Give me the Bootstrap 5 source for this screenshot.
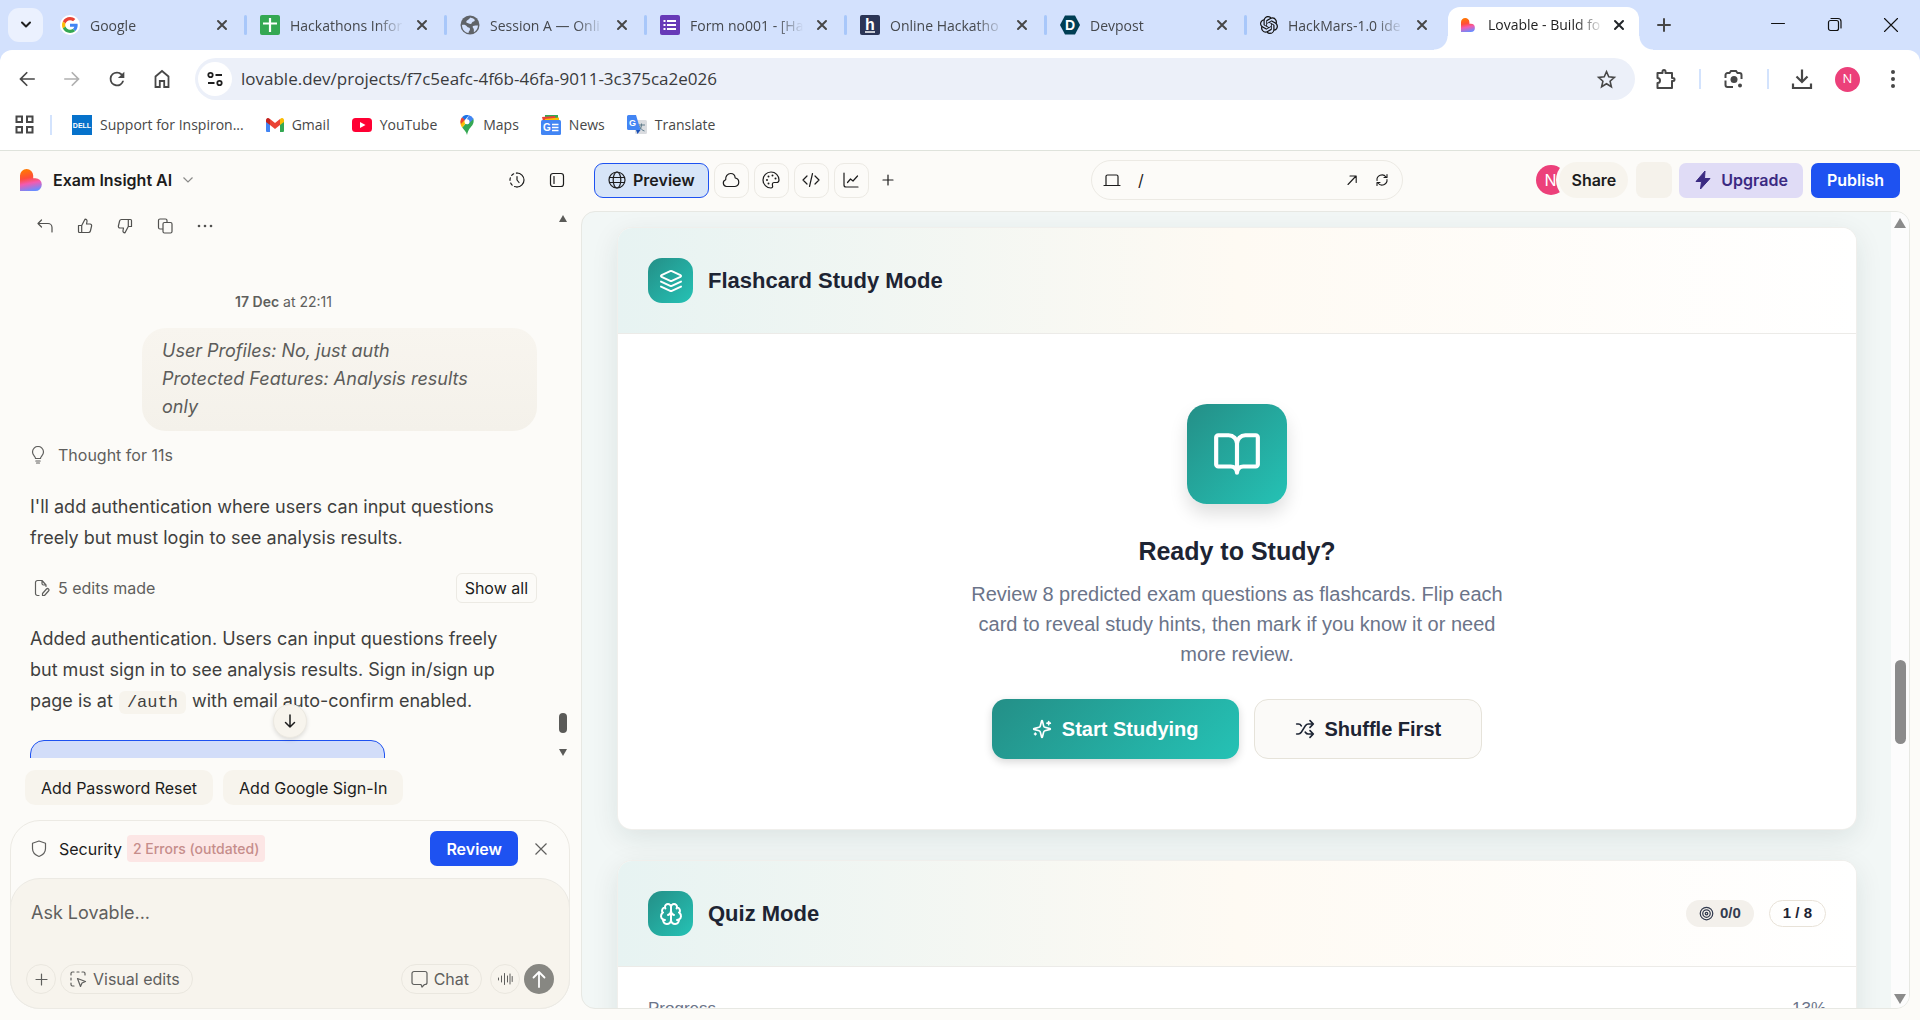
<!DOCTYPE html>
<html lang="en">
<head>
<meta charset="utf-8">
<meta name="viewport" content="width=device-width, initial-scale=1">
<title>Lovable - Build for the web</title>
<link href="https://cdn.jsdelivr.net/npm/bootstrap@5.3.0/dist/css/bootstrap.min.css" rel="stylesheet">
<style>
  :root { --cream: #fcfbf8; --sand: #f7f4ed; --line: #eceae4; --blue: #1e52f1; --ink: #1c1c1c; --mute: #5f5f5d; --navy: #1d2433; --tab-blue: #d3e1fd; }
  body { font-family: Inter, "Liberation Sans", sans-serif; color: var(--ink); background: var(--cream); height: 100vh; overflow: hidden; }
  button, input, textarea { font-family: inherit; color: inherit; }
  .bare { background: none; border: 0; padding: 0; display: inline-flex; align-items: center; justify-content: center; flex: none; }
  svg { display: block; flex: none; }
  .ln { fill: none; stroke: currentColor; stroke-linecap: round; stroke-linejoin: round; }
  .min0 { min-width: 0; min-height: 0; }

  /* browser chrome */
  .chrome { font-family: "Open Sans", "Noto Sans", sans-serif; color: #474747; }
  .tabstrip { background: var(--tab-blue); height: 50px; padding-left: 8px; }
  .tab-search { width: 35px; height: 34px; border-radius: 11px; background: #ebf1fe; color: #1f1f1f; margin-right: 3px; }
  .btab { flex: 0 1 200px; min-width: 0; height: 34px; padding: 0 18px 0 14px; gap: 10px; position: relative; font-size: 14px; }
  .btab::after { content: ""; position: absolute; right: -1px; top: 7px; width: 3px; height: 20px; border-radius: 2px; background: #a8c7fa; }
  .btab.last::after, .btab.on::after { display: none; }
  .btab .label { flex: 1; overflow: hidden; white-space: nowrap; color: #45484d; -webkit-mask-image: linear-gradient(90deg, #000 74%, transparent 98%); mask-image: linear-gradient(90deg, #000 74%, transparent 98%); }
  .btab.on { flex: 0 1 191px; margin-left: 2px; height: 43px; align-self: flex-end; background: #fff; border-radius: 12px 12px 0 0; padding: 0 14px 8px 13px; gap: 13px; }
  .btab.on .label { color: #1f1f1f; margin-right: -6px; }
  .btab.on .flare { position: absolute; bottom: 0; width: 14px; height: 14px; }
  .flare.l { left: -14px; background: radial-gradient(circle at 0 0, transparent 13px, #fff 14px); }
  .flare.r { right: -14px; background: radial-gradient(circle at 100% 0, transparent 13px, #fff 14px); }
  .newtab { margin-left: 18px; }
  .winbtns { gap: 38px; padding-right: 20px; color: #111; }
  .cap { background: var(--tab-blue); }
  .toolbar { background: #fff; height: 58px; border-radius: 12px 12px 0 0; padding: 0 16px; }
  .navset { gap: 23px; margin-right: 22px; }
  .extset { gap: 22px; padding-left: 20px; }
  .omni { background: #ecf0f9; height: 42px; border-radius: 21px; padding: 0 18px 0 3px; }
  .omni .site { width: 34px; height: 34px; border-radius: 50%; background: #fff; color: #1f1f1f; }
  .omni input { border: 0; background: none; outline: 0; font-size: 17px; flex: 1; padding: 0 0 0 9px; color: #3a3b3d; }
  .vbar { width: 2px; height: 20px; background: #d3e3fd; flex: none; }
  .pink { background: #ec407a; color: #fff; border-radius: 50%; }
  .me-pic { width: 25px; height: 25px; font-size: 13px; }
  .bookmarks { background: #fff; height: 42px; padding: 0 15px 9px; font-size: 14px; }
  .bookmarks a { color: #474747; text-decoration: none; white-space: nowrap; display: flex; align-items: center; gap: 8px; }
  .marks { gap: 22px; padding-left: 4px; }

  /* app */
  .app { border-top: 1px solid #dfe3dc; }
  .chat-pane { width: 581px; flex: none; }
  .pane-head { height: 59px; padding: 0 16px 2px 20px; }
  .proj { font-size: 16px; font-weight: 600; gap: 10px; margin-left: 11px; }
  .scroller { overflow: hidden; position: relative; }
  .chat-col { padding: 0 0 0 30px; width: 537px; font-size: 18px; line-height: 31px; color: #3f3f3e; }
  .chat-col .para { margin-top: 20px; padding-right: 10px; }
  .acts { padding: 8px 0 0 7px; gap: 24px; color: #51514f; }
  .stamp { font-size: 14px; line-height: 20px; color: var(--mute); margin-top: 58px; }
  .bubble { margin: 16px 0 0 112px; padding: 9px 20px 10px; border-radius: 24px; background: linear-gradient(#f8f5ef, #f4f1ea); font-style: italic; line-height: 28px; color: #5c5c5a; }
  .soft { font-size: 16px; line-height: 24px; color: var(--mute); }
  .soft.thought { margin: 12px 0 4px; gap: 12px; }
  .soft.edits { margin-top: 20px; }
  .show-all { font-size: 16px; line-height: 22px; border: 1px solid var(--line); border-radius: 6px; background: none; padding: 3px 8px; color: var(--ink); }
  .codebit { font: 17px/24px "Liberation Mono", monospace; color: #3f3f3e; background: var(--sand); border-radius: 6px; padding: 2px 8px; margin: 0 1px; }
  .bluecard { width: 355px; height: 60px; flex: none; border: 1px solid var(--blue); border-radius: 14px; background: #d2ddf9; margin-top: 24px; }
  .jump { position: absolute; left: 273px; bottom: 20px; width: 34px; height: 34px; border-radius: 50%; background: var(--sand); border: 1px solid #ece9e1; box-shadow: 0 2px 4px rgba(0,0,0,.12); z-index: 2; }
  .rail { position: absolute; right: 10px; top: 5px; bottom: 2px; width: 16px; }
  .rail .knob { width: 8px; height: 20px; border-radius: 4px; background: #5a5a58; }
  .chips { gap: 10px; padding: 12px 0 0 25px; }
  .chip { background: var(--sand); border: 0; border-radius: 10px; height: 35px; padding: 0 16px; font-size: 16px; }
  .composer { margin: 15px 11px 11px 10px; border: 1px solid var(--line); border-radius: 30px; }
  .sec-row { height: 57px; padding: 0 21px 2px 20px; font-size: 16px; }
  .sec-name { margin: 0 5px 0 12px; }
  .warn { background: #fce6e5; color: #c68d8b; font-size: 14px; font-weight: 500; border-radius: 4px; height: 27px; padding: 0 6px; }
  .solid { background: var(--blue); color: #fff; border: 0; border-radius: 7px; height: 35px; font-size: 16px; font-weight: 600; padding: 0 16px; }
  .askbox { background: var(--sand); border: 1px solid var(--line); border-radius: 30px; margin: 0 -1px -1px; padding: 20px 15px 14px 15px; }
  .askbox textarea { border: 0; background: none; outline: 0; resize: none; display: block; width: 100%; height: 65px; font-size: 18px; line-height: 28px; padding: 0 5px; overflow: hidden; }
  .askbox textarea::placeholder { color: #5f5f5d; opacity: 1; }
  .round { height: 30px; border: 1px solid #eae7df; border-radius: 15px; background: none; color: var(--mute); font-size: 16px; gap: 6px; }
  .round.sq { width: 30px; padding: 0; }
  .send { width: 30px; height: 30px; background: #878782; color: #fff; }

  /* preview */
  .tools { height: 60px; padding: 0 20px 2px 13px; }
  .tools-side { flex: 1 1 0; gap: 5px; }
  .tbtn { width: 35px; height: 35px; border: 1px solid var(--line); border-radius: 10px; padding: 0; }
  .pv { height: 35px; border: 1px solid var(--blue); border-radius: 9px; background: #d7e5f8; font-size: 16px; font-weight: 600; padding: 0 13px; gap: 7px; }
  .addr { width: 312px; height: 40px; border: 1px solid var(--line); border-radius: 20px; padding: 0 13px 0 11px; gap: 17px; }
  .addr input { border: 0; background: none; outline: 0; flex: 1; font-size: 16px; padding: 0; }
  .mate { width: 30px; height: 30px; font-size: 16px; }
  .share { height: 36px; border: 0; border-radius: 18px; background: var(--sand); padding: 0 12px; font-size: 16px; font-weight: 600; margin-left: -12px; position: relative; box-shadow: 0 0 0 3px var(--cream); }
  .blank { width: 36px; height: 36px; border-radius: 8px; background: #f5f2eb; margin: 0 2px 0 3px; }
  .upg { background: #e0dcf6; color: #3b2a82; border: 0; border-radius: 7px; height: 35px; font-size: 16px; font-weight: 600; padding: 0 15px; margin-right: 3px; gap: 9px; }
  .frame { border: 1px solid #e7e8e3; border-radius: 14px; margin: 0 10px 11px 0; overflow: hidden; background: #f2f7f6; }
  .site-col { font-family: "Liberation Sans", Arial, sans-serif; padding: 16px 35px 0 36px; gap: 32px; overflow: hidden; }
  .panel { background: #fff; border-radius: 14px; box-shadow: 0 0 0 1px #f0efec, 0 8px 28px rgba(20,50,45,.10); flex: none; overflow: hidden; color: var(--navy); }
  .panel-head { height: 106px; padding: 0 30px; border-bottom: 1px solid #ecebe8; background: linear-gradient(90deg, #e7f3f2, #fefaf3 50%, #fff); }
  .grad { background: linear-gradient(135deg, #248f87, #25c2b5); color: #fff; }
  .tile { width: 45px; height: 45px; border-radius: 14px; margin-right: 15px; }
  .panel h2 { font-size: 22px; font-weight: 700; line-height: 30px; margin: 0; }
  .hero { padding: 70px 30px; }
  .bigtile { width: 100px; height: 100px; border-radius: 20px; box-shadow: 0 10px 18px rgba(0,0,0,.13); }
  .hero h3 { font-size: 25px; line-height: 34px; font-weight: 700; margin: 30px 0 0; }
  .hero p { font-size: 20px; line-height: 30px; color: #6b7489; max-width: 560px; margin: 11px 0 30px; }
  .cta-row { gap: 15px; }
  .cta { height: 60px; border-radius: 14px; font-size: 20px; font-weight: 700; padding: 0 40px; gap: 10px; border: 0; }
  .cta.grad { box-shadow: 0 3px 8px rgba(0,0,0,.16); }
  .cta.plain { background: #fbfaf8; border: 1px solid #e6e3da; color: var(--navy); }
  .pillb { height: 27px; border-radius: 14px; font-size: 15px; font-weight: 700; padding: 0 13px; gap: 6px; }
  .pillb.score { background: #f3f0eb; color: #343c50; margin-right: 15px; }
  .pillb.step { border: 1px solid #e8e2d8; }
  .prog { padding: 29px 30px; font-size: 17px; line-height: 25px; color: #6b7489; }
  .vscroll { width: 18px; background: #fcfcfc; color: #8b8b8b; flex: none; padding: 6px 0 4px; }
  .vscroll .knob { width: 11px; height: 84px; border-radius: 6px; background: #8b8b8b; }
  .above { flex: 429; }
  .below { flex: 249; }
</style>
</head>
<body class="d-flex flex-column">

<header class="chrome flex-shrink-0">
  <div class="tabstrip d-flex align-items-center">
    <button class="bare tab-search" aria-label="Search tabs"><svg width="12" height="8" class="ln" stroke-width="2"><path d="M2 1.500l4 4 4-4"/></svg></button>
    <div class="btab d-flex align-items-center">
      <svg width="20" height="20" viewBox="-6 -6 60 60"><circle cx="24" cy="24" r="30" fill="#fff"/><path fill="#EA4335" d="M24 9.5c3.540 0 6.710 1.220 9.210 3.600l6.850-6.850C35.900 2.380 30.470 0 24 0 14.620 0 6.510 5.380 2.560 13.220l7.980 6.190C12.430 13.720 17.740 9.500 24 9.500z"/><path fill="#4285F4" d="M46.980 24.550c0-1.570-.15-3.090-.38-4.550H24v9.020h12.940c-.58 2.960-2.260 5.480-4.780 7.180l7.730 6c4.510-4.180 7.090-10.360 7.090-17.650z"/><path fill="#FBBC05" d="M10.530 28.590c-.48-1.450-.76-2.990-.76-4.590s.27-3.140.76-4.590l-7.980-6.190C.92 16.460 0 20.120 0 24c0 3.880.92 7.540 2.560 10.780l7.970-6.190z"/><path fill="#34A853" d="M24 48c6.480 0 11.930-2.130 15.890-5.810l-7.730-6c-2.150 1.450-4.920 2.300-8.160 2.300-6.260 0-11.570-4.220-13.470-9.910l-7.980 6.190C6.510 42.620 14.620 48 24 48z"/></svg>
      <span class="label">Google</span><button class="bare" aria-label="Close tab"><svg width="12" height="12" class="ln" stroke-width="2"><path d="M2 2l8 8M10 2l-8 8"/></svg></button>
    </div>
    <div class="btab d-flex align-items-center">
      <svg width="20" height="20" viewBox="0 0 20 20"><rect width="20" height="20" rx="2" fill="#34a853"/><path d="M10 3v14M3 8.500h14" stroke="#fff" stroke-width="2.200"/></svg>
      <span class="label">Hackathons Infor</span><button class="bare" aria-label="Close tab"><svg width="12" height="12" class="ln" stroke-width="2"><path d="M2 2l8 8M10 2l-8 8"/></svg></button>
    </div>
    <div class="btab d-flex align-items-center">
      <svg width="20" height="20" viewBox="0 0 20 20"><circle cx="10" cy="10" r="9.500" fill="#5f6368"/><path d="M10.500 2.500c1.500 1 3 .5 4 2s-1 2-2 2.500-.5 2-2 2-2-1-3-1-1.500-1-1-2 2-1 2.500-2zM2 10c2-.5 4 0 5 1.500s3 .5 3 2.500-1.500 2-1.500 4C5 17.500 2 14.500 2 10zM13 11c1.500-1 3.500-.5 5-.5-.2 3-1.800 5.500-4 6.800-.5-1.300.2-2-.3-3.300S12 12 13 11z" fill="#d3e1fd"/></svg>
      <span class="label">Session A — Onli</span><button class="bare" aria-label="Close tab"><svg width="12" height="12" class="ln" stroke-width="2"><path d="M2 2l8 8M10 2l-8 8"/></svg></button>
    </div>
    <div class="btab d-flex align-items-center">
      <svg width="20" height="20" viewBox="0 0 20 20"><rect width="20" height="20" rx="2" fill="#673ab7"/><path d="M7 6h9M7 10h9M7 14h9M3.500 6h2M3.500 10h2M3.500 14h2" stroke="#fff" stroke-width="2"/></svg>
      <span class="label">Form no001 - [Ha</span><button class="bare" aria-label="Close tab"><svg width="12" height="12" class="ln" stroke-width="2"><path d="M2 2l8 8M10 2l-8 8"/></svg></button>
    </div>
    <div class="btab d-flex align-items-center">
      <svg width="20" height="20" viewBox="0 0 20 20"><rect width="20" height="20" rx="2" fill="#2b3556"/><text x="10" y="14.500" font-size="16" font-weight="700" text-anchor="middle" fill="#fff" font-family="Liberation Sans">h</text><path d="M5 17h10" stroke="#fff" stroke-width="1.500"/></svg>
      <span class="label">Online Hackatho</span><button class="bare" aria-label="Close tab"><svg width="12" height="12" class="ln" stroke-width="2"><path d="M2 2l8 8M10 2l-8 8"/></svg></button>
    </div>
    <div class="btab d-flex align-items-center">
      <svg width="20" height="20" viewBox="0 0 20 20"><path d="M5 .5h10l5 9.500-5 9.500H5L0 10z" fill="#003e54"/><text x="10" y="15" font-size="14" font-weight="700" text-anchor="middle" fill="#fff" font-family="Liberation Sans">D</text></svg>
      <span class="label">Devpost</span><button class="bare" aria-label="Close tab"><svg width="12" height="12" class="ln" stroke-width="2"><path d="M2 2l8 8M10 2l-8 8"/></svg></button>
    </div>
    <div class="btab last d-flex align-items-center">
      <svg width="18" height="18" viewBox="0 0 24 24"><path d="M22.2819 9.8211a5.9847 5.9847 0 0 0-.5157-4.9108 6.0462 6.0462 0 0 0-6.5098-2.9A6.0651 6.0651 0 0 0 4.9807 4.1818a5.9847 5.9847 0 0 0-3.9977 2.9 6.0462 6.0462 0 0 0 .7427 7.0966 5.98 5.98 0 0 0 .511 4.9107 6.051 6.051 0 0 0 6.5146 2.9001A5.9847 5.9847 0 0 0 13.2599 24a6.0557 6.0557 0 0 0 5.7718-4.2058 5.9894 5.9894 0 0 0 3.9977-2.9001 6.0557 6.0557 0 0 0-.7475-7.0729zm-9.022 12.6081a4.4755 4.4755 0 0 1-2.8764-1.0408l.1419-.0804 4.7783-2.7582a.7948.7948 0 0 0 .3927-.6813v-6.7369l2.02 1.1686a.071.071 0 0 1 .038.052v5.5826a4.504 4.504 0 0 1-4.4945 4.4944zm-9.6607-4.1254a4.4708 4.4708 0 0 1-.5346-3.0137l.142.0852 4.783 2.7582a.7712.7712 0 0 0 .7806 0l5.8428-3.3685v2.3324a.0804.0804 0 0 1-.0332.0615L9.74 19.9502a4.4992 4.4992 0 0 1-6.1408-1.6464zM2.3408 7.8956a4.485 4.485 0 0 1 2.3655-1.9728V11.6a.7664.7664 0 0 0 .3879.6765l5.8144 3.3543-2.0201 1.1685a.0757.0757 0 0 1-.071 0l-4.8303-2.7865A4.504 4.504 0 0 1 2.3408 7.872zm16.5963 3.8558L13.1038 8.364 15.1192 7.2a.0757.0757 0 0 1 .071 0l4.8303 2.7913a4.4944 4.4944 0 0 1-.6765 8.1042v-5.6772a.79.79 0 0 0-.407-.667zm2.0107-3.0231l-.142-.0852-4.7735-2.7818a.7759.7759 0 0 0-.7854 0L9.409 9.2297V6.8974a.0662.0662 0 0 1 .0284-.0615l4.8303-2.7866a4.4992 4.4992 0 0 1 6.6802 4.66zM8.3065 12.863l-2.02-1.1638a.0804.0804 0 0 1-.038-.0567V6.0742a4.4992 4.4992 0 0 1 7.3757-3.4537l-.142.0805L8.704 5.459a.7948.7948 0 0 0-.3927.6813zm1.0976-2.3654l2.602-1.4998 2.6069 1.4998v2.9994l-2.5974 1.4997-2.6067-1.4997Z" fill="#111"/></svg>
      <span class="label">HackMars-1.0 ide</span><button class="bare" aria-label="Close tab"><svg width="12" height="12" class="ln" stroke-width="2"><path d="M2 2l8 8M10 2l-8 8"/></svg></button>
    </div>
    <div class="btab on d-flex align-items-center">
      <span class="flare l"></span><span class="flare r"></span>
      <svg width="14" height="14" viewBox="0 0 22 22"><use href="#heart"/></svg>
      <span class="label">Lovable - Build fo</span><button class="bare text-dark" aria-label="Close tab"><svg width="12" height="12" class="ln" stroke-width="2"><path d="M2 2l8 8M10 2l-8 8"/></svg></button>
    </div>
    <button class="bare newtab" aria-label="New tab"><svg width="14" height="14" class="ln" stroke-width="2"><path d="M7 1v12M1 7h12"/></svg></button>
    <div class="winbtns d-flex align-items-center ms-auto">
      <button class="bare" aria-label="Minimise"><svg width="20" height="20" class="ln" stroke-width="1"><path d="M3.500 8.500h13"/></svg></button>
      <button class="bare" aria-label="Restore"><svg width="18" height="18" class="ln" stroke-width="1.200"><rect x="2.500" y="4.500" width="10" height="10" rx="2"/><path d="M5 2.500h7a3 3 0 0 1 3 3V12"/></svg></button>
      <button class="bare" aria-label="Close window"><svg width="18" height="18" class="ln" stroke-width="1.100"><path d="M2.500 2.500l13 13M15.500 2.500l-13 13"/></svg></button>
    </div>
  </div>

  <div class="cap">
  <div class="toolbar d-flex align-items-center">
    <div class="navset d-flex align-items-center">
      <button class="bare" aria-label="Back"><svg width="22" height="22" viewBox="0 0 24 24" fill="#474747"><path d="M20.500 11.100H7l5.900-5.900L11.600 4l-8 8 8 8 1.300-1.200L7 12.900h13.500z"/></svg></button>
      <button class="bare" aria-label="Forward"><svg width="22" height="22" viewBox="0 0 24 24" fill="#b0b0b0"><path d="M3.500 11.100H17l-5.900-5.900L12.400 4l8 8-8 8-1.300-1.200 5.900-5.900H3.500z"/></svg></button>
      <button class="bare" aria-label="Reload"><svg width="22" height="22" viewBox="0 0 24 24" fill="#474747"><path d="M17.650 6.350A7.960 7.960 0 0 0 12 4a8 8 0 1 0 7.730 10h-2.080A6 6 0 1 1 12 6c1.660 0 3.140.69 4.220 1.780L13 11h7V4z"/></svg></button>
      <button class="bare" aria-label="Home"><svg width="22" height="22" viewBox="0 0 22 22" fill="none" stroke="#474747" stroke-width="1.800"><path d="M4.500 8.500L11 3l6.500 5.500V19h-4.300v-6H8.800v6H4.500z"/></svg></button>
    </div>
    <div class="omni d-flex align-items-center flex-grow-1">
      <button class="bare site" aria-label="Site information"><svg width="18" height="18" fill="none" stroke="currentColor" stroke-width="1.800"><circle cx="4.500" cy="5" r="2.200"/><path d="M9.500 5H16M2 13h6.500"/><circle cx="13.500" cy="13" r="2.200"/></svg></button>
      <input type="text" aria-label="Address" value="lovable.dev/projects/f7c5eafc-4f6b-46fa-9011-3c375ca2e026">
      <button class="bare" aria-label="Bookmark"><svg width="21" height="21" viewBox="0 0 24 24" fill="none" stroke="#474747" stroke-width="1.800"><path d="M12 3l2.600 6 6.400.6-4.900 4.300 1.500 6.400L12 16.900l-5.600 3.400 1.500-6.400L3 9.600 9.400 9z"/></svg></button>
    </div>
    <div class="extset d-flex align-items-center">
      <button class="bare" aria-label="Extensions"><svg width="22" height="22" viewBox="0 0 22 22" fill="none" stroke="#474747" stroke-width="2" stroke-linejoin="round"><path d="M2.500 5h5V3.500a1.500 1.500 0 0 1 3 0V5H17v5h1a1.500 1.500 0 0 1 0 3h-1v7H2.500v-5a2.500 2.500 0 0 0 0-5z"/></svg></button>
      <span class="vbar"></span>
      <button class="bare" aria-label="Lens"><svg width="22" height="22" fill="none" stroke="#474747" stroke-width="2"><path d="M2.500 10V7a2 2 0 0 1 2-2h2l1.500-2h5L14.500 5h2a2 2 0 0 1 2 2v4M2.500 12.500V17a2 2 0 0 0 2 2H10"/><circle cx="11" cy="11.500" r="3.500" fill="#474747" stroke="none"/><circle cx="17" cy="17.500" r="2" fill="#474747" stroke="none"/></svg></button>
      <span class="vbar"></span>
      <button class="bare" aria-label="Downloads"><svg width="22" height="22" fill="none" stroke="#474747" stroke-width="2.200"><path d="M11 1.500v12M5.500 8.500L11 14l5.500-5.500M2 15.500V20h18v-4.500"/></svg></button>
      <button class="bare pink me-pic" aria-label="Profile">N</button>
      <button class="bare" aria-label="Menu"><svg width="22" height="22" fill="#474747"><circle cx="11" cy="4" r="2"/><circle cx="11" cy="11" r="2"/><circle cx="11" cy="18" r="2"/></svg></button>
    </div>
  </div>
  </div>

  <nav class="bookmarks d-flex align-items-center">
    <button class="bare" aria-label="Apps"><svg width="19" height="19" fill="none" stroke="#474747" stroke-width="2"><path d="M1.500 1.500h5.500v5.500H1.500zM12 1.500h5.500v5.500H12zM1.500 12h5.500v5.500H1.500zM12 12h5.500v5.500H12z"/></svg></button>
    <span class="vbar ms-3 me-3"></span>
    <div class="marks d-flex align-items-center">
    <a href="#"><svg width="20" height="20"><rect width="20" height="20" fill="#0672cb"/><text x="10" y="13" font-size="7" font-weight="700" text-anchor="middle" fill="#fff" font-family="Liberation Sans">DELL</text></svg>Support for Inspiron...</a>
    <a href="#"><svg width="18" height="14" viewBox="0 0 18 14"><path d="M0 2v11a1 1 0 0 0 1 1h3V5z" fill="#4285f4"/><path d="M18 2v11a1 1 0 0 1-1 1h-3V5z" fill="#34a853"/><path d="M14 1v6l4-3V2a2 2 0 0 0-3.200-1.600z" fill="#fbbc04"/><path d="M4 1v6l5 4 5-4V1L9 5z" fill="#ea4335"/><path d="M0 4l4 3V1l-.8-.6A2 2 0 0 0 0 2z" fill="#c5221f"/></svg>Gmail</a>
    <a href="#"><svg width="20" height="14"><rect width="20" height="14" rx="3.500" fill="#f03"/><path d="M8 4l5.500 3L8 10z" fill="#fff"/></svg>YouTube</a>
    <a href="#"><svg width="16" height="20" viewBox="1 0 16 20"><path d="M9 20c-.6-3.500-3-5-4.800-7.500L11 5l4.300-1.500C17 9 12.500 12 11 14.500 9.800 16.500 9.600 18 9 20z" fill="#34a853"/><path d="M4.200 12.500C2.600 10.300 2.300 8.500 2.400 6.500L4 3.500 9 7z" fill="#fbbc04"/><path d="M11 .3A6.600 6.600 0 0 1 15.500 4L9 10V4z" fill="#4285f4"/><path d="M4 2.300A6.600 6.600 0 0 1 11 .3L6.500 5.500z" fill="#1a73e8"/><path d="M4 2.300L6.800 4.700 3 9C2 6.500 2.500 4 4 2.300z" fill="#ea4335"/><circle cx="9" cy="6.700" r="2.500" fill="#fff"/></svg>Maps</a>
    <a href="#"><svg width="20" height="20"><path d="M4 0h13v6H4z" fill="#34a853"/><path d="M1 2l13-1 1 5H2z" fill="#ea4335"/><path d="M4 4l14-1.500V7H4z" fill="#fbbc04"/><rect y="5" width="20" height="15" rx="1.500" fill="#4285f4"/><text x="6" y="16" font-size="10" font-weight="700" text-anchor="middle" fill="#fff" font-family="Liberation Sans">G</text><path d="M11 9.500h6.500M11 12.500h6.500M11 15.500h6.500" stroke="#fff" stroke-width="1.400"/></svg>News</a>
    <a href="#"><svg width="20" height="20"><rect x="8" y="5" width="12" height="14" rx="1.500" fill="#dadce0"/><path d="M11 10h7M14.500 8.500V10c0 3-2 5-3.500 6M12.500 11c.5 2.500 3 4.500 5 5" stroke="#607d8b" fill="none"/><path d="M1.500 0H9l4.500 15H1.500A1.500 1.500 0 0 1 0 13.500v-12A1.500 1.500 0 0 1 1.500 0z" fill="#4285f4"/><path d="M9 15h4.500L10.500 19z" fill="#1a51b8"/><text x="5.500" y="11" font-size="9" font-weight="700" text-anchor="middle" fill="#fff" font-family="Liberation Sans">G</text></svg>Translate</a>
    </div>
  </nav>
</header>

<svg width="0" height="0" class="position-absolute" aria-hidden="true"><defs>
  <linearGradient id="hg" x1="0.300" y1="0" x2="0.500" y2="1"><stop offset="0" stop-color="#ff7a00"/><stop offset=".4" stop-color="#ff4d3a"/><stop offset=".65" stop-color="#f35bb0"/><stop offset="1" stop-color="#6a8cff"/></linearGradient>
  <path id="heart" d="M0 22V6.600a6.600 6.600 0 0 1 13.200 0v2.600h2.200a6.400 6.400 0 0 1 0 12.800z" fill="url(#hg)"/>
</defs></svg>

<main class="app d-flex flex-grow-1 min0">
  <section class="chat-pane d-flex flex-column">
    <div class="pane-head d-flex align-items-center flex-shrink-0">
      <svg width="22" height="22"><use href="#heart"/></svg>
      <button class="bare proj">Exam Insight AI<svg width="12" height="8" fill="none" stroke="#8a8a88" stroke-width="1.200"><path d="M1.500 1.500l4.500 4.500 4.500-4.500"/></svg></button>
      <div class="d-flex ms-auto gap-4">
        <button class="bare" aria-label="History"><svg width="16" height="16" viewBox="0 0 16 16" class="ln" stroke-width="1.200"><path d="M8 1a7 7 0 1 1 0 14"/><path d="M8 15A7 7 0 1 1 8 1" stroke-dasharray="2.500 2.800"/><path d="M8 4.500V8l2 2.500"/></svg></button>
        <button class="bare" aria-label="Toggle panel"><svg width="16" height="16" viewBox="0 0 16 16" class="ln" stroke-width="1.200"><rect x="1.500" y="1.500" width="13" height="13" rx="2.500"/><path d="M5 4.500v7"/></svg></button>
      </div>
    </div>

    <div class="scroller flex-grow-1 min0">
      <div class="chat-col d-flex flex-column">
        <div class="acts d-flex">
          <button class="bare" aria-label="Revert"><svg width="16" height="16" class="ln" stroke-width="1.200"><path d="M4.500 2L1 5.500 4.500 9M1 5.500h10a4 4 0 0 1 4 4V14"/></svg></button>
          <button class="bare" aria-label="Good response"><svg width="16" height="16" class="ln" stroke-width="1.200"><path d="M1.500 7.500h3.200v7H2.500a1 1 0 0 1-1-1zM4.700 7.500L8 1.200c1.600 0 2.200 1 2 2.300L9.500 6h3.600a1.600 1.600 0 0 1 1.500 2l-1.200 5a2 2 0 0 1-2 1.500H4.700"/></svg></button>
          <button class="bare" aria-label="Bad response"><svg width="16" height="16" class="ln" stroke-width="1.200"><path d="M14.500 8.500h-3.200v-7h2.200a1 1 0 0 1 1 1zM11.300 8.500L8 14.800c-1.600 0-2.200-1-2-2.300l.5-2.500H2.900a1.600 1.600 0 0 1-1.500-2l1.200-5a2 2 0 0 1 2-1.500h6.700"/></svg></button>
          <button class="bare" aria-label="Copy"><svg width="16" height="16" class="ln" stroke-width="1.200"><path d="M5.500 11H3a1.500 1.500 0 0 1-1.500-1.500V2.500A1.500 1.500 0 0 1 3 1h5.500A1.500 1.500 0 0 1 10 2.500V4"/><rect x="6" y="4.500" width="9" height="10.500" rx="1.500"/></svg></button>
          <button class="bare" aria-label="More"><svg width="16" height="16" fill="currentColor"><circle cx="2" cy="8" r="1.300"/><circle cx="8" cy="8" r="1.300"/><circle cx="14" cy="8" r="1.300"/></svg></button>
        </div>
        <div class="stamp text-center"><span class="fw-semibold">17 Dec</span> at 22:11</div>
        <div class="bubble">User Profiles: No, just auth<br>Protected Features: Analysis results<br>only</div>
        <div class="soft thought d-flex align-items-center"><svg width="16" height="18" viewBox="0 0 16 18" class="ln" stroke-width="1.200"><path d="M5.500 12.500c0-2-3-3-3-6.500a5.500 5.500 0 0 1 11 0c0 3.500-3 4.500-3 6.500zM5.800 15h4.400M6.500 17h3"/></svg>Thought for 11s</div>
        <div class="para">I'll add authentication where users can input questions freely but must login to see analysis results.</div>
        <div class="soft edits d-flex align-items-center justify-content-between">
          <span class="d-flex align-items-center gap-2"><svg width="16" height="18" viewBox="0 0 16 18" class="ln ms-1" stroke-width="1.200"><path d="M5 16.500H3.500a2 2 0 0 1-2-2v-11a2 2 0 0 1 2-2H8L12 6v1.500M8 1.500V4.500A1.500 1.500 0 0 0 9.500 6H12M8.500 16.500v-2l4-4.500a1.400 1.400 0 0 1 2 2l-4 4.500z"/></svg>5 edits made</span>
          <button class="show-all">Show all</button>
        </div>
        <div class="para">Added authentication. Users can input questions freely but must sign in to see analysis results. Sign in/sign up page is at <span class="codebit">/auth</span> with email auto-confirm enabled.</div>
        <div class="bluecard"></div>
      </div>
      <button class="bare jump" aria-label="Jump to latest"><svg width="14" height="16" class="ln" stroke-width="1.500"><path d="M7 2v12M2.500 9.500L7 14l4.500-4.500"/></svg></button>
      <div class="rail d-flex flex-column align-items-center">
        <svg width="8" height="7" fill="#5a5a58"><path d="M4 0l4 7H0z"/></svg>
        <div class="flex-grow-1"></div><div class="knob"></div>
        <svg class="mt-3" width="8" height="7" fill="#5a5a58"><path d="M4 7l4-7H0z"/></svg>
      </div>
    </div>

    <div class="chips d-flex flex-shrink-0">
      <button class="chip">Add Password Reset</button><button class="chip">Add Google Sign-In</button>
    </div>

    <div class="composer flex-shrink-0">
      <div class="sec-row d-flex align-items-center">
        <svg width="16" height="18" viewBox="0 0 16 18" class="ln" stroke-width="1.200"><path stroke="#5f5f5d" d="M8 1l6.500 2.200v5.300c0 4-2.500 6.500-6.500 8-4-1.500-6.500-4-6.500-8V3.200z"/></svg>
        <span class="sec-name">Security</span>
        <span class="warn d-flex align-items-center">2 Errors (outdated)</span>
        <button class="solid ms-auto">Review</button>
        <button class="bare ms-3" aria-label="Dismiss"><svg width="14" height="14" fill="none" stroke="#5f5f5d" stroke-width="1.200"><path d="M1.500 1.500l11 11M12.500 1.500l-11 11"/></svg></button>
      </div>
      <div class="askbox">
        <textarea aria-label="Message" placeholder="Ask Lovable..."></textarea>
        <div class="d-flex align-items-center gap-1">
          <button class="bare round sq" aria-label="Attach"><svg width="13" height="13" class="ln" stroke-width="1.200"><path d="M6.500 1v11M1 6.500h11"/></svg></button>
          <button class="round d-flex align-items-center ps-2 pe-2"><svg width="18" height="18" class="ln" stroke-width="1.200"><path d="M2 5V3.500A1.500 1.500 0 0 1 3.500 2H5M8 2h2M13 2h1.500A1.500 1.500 0 0 1 16 3.500V5M2 8v2M2 13v1.500A1.500 1.500 0 0 0 3.500 16H5M8.500 8.500l8 3-3.500 1.500-1.500 3.500z"/></svg><span class="pe-1">Visual edits</span></button>
          <button class="round d-flex align-items-center ms-auto px-2 me-1"><svg width="18" height="18" class="ln" stroke-width="1.200"><path d="M4 1.500h11A2 2 0 0 1 17 3.500v9a2 2 0 0 1-2 2h-.5L12 17l-1-2.500H4a2 2 0 0 1-2-2v-9a2 2 0 0 1 2-2z"/></svg><span class="pe-1">Chat</span></button>
          <button class="bare round sq" aria-label="Voice"><svg width="16" height="16" class="ln" stroke-width="1"><path d="M1.500 7v2M4.500 5v6M7.500 2.500v11M10.500 5v6M13 3v10M15.200 5.500v5"/></svg></button>
          <button class="bare rounded-circle send" aria-label="Send"><svg width="16" height="18" class="ln" stroke-width="1.800"><path d="M8 17V2M2.500 7.500L8 2l5.500 5.500"/></svg></button>
        </div>
      </div>
    </div>
  </section>

  <section class="d-flex flex-column flex-grow-1 min0">
    <div class="tools d-flex align-items-center flex-shrink-0">
      <div class="tools-side d-flex align-items-center">
        <button class="pv d-flex align-items-center"><svg width="18" height="18" class="ln" stroke-width="1.200"><circle cx="9" cy="9" r="8"/><ellipse cx="9" cy="9" rx="3.800" ry="8"/><path d="M1.500 6.500h15M1.500 11.500h15"/></svg>Preview</button>
        <button class="bare tbtn" aria-label="Cloud"><svg width="18" height="18" class="ln" stroke-width="1.200"><path d="M4.500 15.500a3.500 3.500 0 0 1-.8-6.800c-.4-3 1.800-6.200 5-6.200 2.600 0 4.300 2 4.500 4.500a4.300 4.300 0 0 1-.2 8.500z"/></svg></button>
        <button class="bare tbtn" aria-label="Design"><svg width="18" height="18" class="ln" stroke-width="1.200"><path d="M9 1a8 8 0 0 0 0 16c1.200 0 1.800-.8 1.600-1.800-.3-1.500-.6-3.700 1.400-3.700h2.500c1.700 0 2.500-1 2.500-2.500C17 4.500 13.500 1 9 1z"/><g fill="currentColor" stroke="none"><circle cx="5" cy="9" r="1"/><circle cx="6.500" cy="5.500" r="1"/><circle cx="10.500" cy="4.500" r="1"/><circle cx="13.500" cy="7.500" r="1"/><circle cx="6.500" cy="12.500" r="1"/></g></svg></button>
        <button class="bare tbtn" aria-label="Code"><svg width="18" height="18" class="ln" stroke-width="1.200"><path d="M5 5L1 9l4 4M13 5l4 4-4 4M10.500 2.500l-3 13"/></svg></button>
        <button class="bare tbtn" aria-label="Analytics"><svg width="18" height="18" class="ln" stroke-width="1.200"><path d="M2 2v12a2 2 0 0 0 2 2h12M5.500 11.500l3-3.500 2.500 2 4.500-5"/></svg></button>
        <button class="bare ms-2" aria-label="More tools"><svg width="12" height="12" class="ln" stroke-width="1.200"><path d="M6 1v10M1 6h10"/></svg></button>
      </div>
      <div class="addr d-flex align-items-center">
        <button class="bare" aria-label="Device"><svg width="18" height="14" class="ln" stroke-width="1.200"><path d="M3 12V3.500A1.500 1.500 0 0 1 4.500 2h9A1.500 1.500 0 0 1 15 3.500V12M1 12.500h16"/></svg></button>
        <input type="text" aria-label="Path" value="/" class="min0">
        <button class="bare" aria-label="Open"><svg width="12" height="12" class="ln" stroke-width="1.100"><path d="M2 10.500l8-8.500M4 2h6.200v6.500"/></svg></button>
        <button class="bare" aria-label="Refresh"><svg width="14" height="14" class="ln" stroke-width="1.100"><path d="M2 7.500A5 5 0 0 1 11 4M12 1.500V4.500H9M12 6.500A5 5 0 0 1 3 10M2 12.500V9.500H5"/></svg></button>
      </div>
      <div class="tools-side d-flex align-items-center justify-content-end">
        <span class="pink mate d-flex align-items-center ps-2">N</span>
        <button class="share">Share</button>
        <span class="blank"></span>
        <button class="upg d-flex align-items-center"><svg width="18" height="20" fill="#3b2a82"><path d="M11 1L2 11.500h5.500L6.500 19 16 8.500h-5.500z" stroke="#3b2a82" stroke-linejoin="round"/></svg>Upgrade</button>
        <button class="solid">Publish</button>
      </div>
    </div>

    <div class="frame d-flex flex-grow-1 min0">
      <div class="site-col d-flex flex-column flex-grow-1 min0">
        <article class="panel">
          <div class="panel-head d-flex align-items-center">
            <span class="tile grad d-flex align-items-center justify-content-center"><svg width="24" height="24" class="ln" stroke-width="2"><path d="M12.830 2.180a2 2 0 0 0-1.660 0L2.600 6.080a1 1 0 0 0 0 1.830l8.580 3.910a2 2 0 0 0 1.660 0l8.580-3.900a1 1 0 0 0 0-1.830ZM22 17.650l-9.170 4.160a2 2 0 0 1-1.660 0L2 17.650M22 12.650l-9.170 4.160a2 2 0 0 1-1.660 0L2 12.650"/></svg></span>
            <h2>Flashcard Study Mode</h2>
          </div>
          <div class="hero d-flex flex-column align-items-center text-center">
            <span class="bigtile grad d-flex align-items-center justify-content-center"><svg width="50" height="50" viewBox="0 0 24 24" class="ln" stroke-width="2"><path d="M12 7v14M3 18a1 1 0 0 1-1-1V4a1 1 0 0 1 1-1h5a4 4 0 0 1 4 4 4 4 0 0 1 4-4h5a1 1 0 0 1 1 1v13a1 1 0 0 1-1 1h-6a3 3 0 0 0-3 3 3 3 0 0 0-3-3z"/></svg></span>
            <h3>Ready to Study?</h3>
            <p>Review 8 predicted exam questions as flashcards. Flip each card to reveal study hints, then mark if you know it or need more review.</p>
            <div class="cta-row d-flex">
              <button class="cta grad d-flex align-items-center"><svg width="20" height="20" viewBox="0 0 24 24" class="ln" stroke-width="2"><path d="M9.937 15.500A2 2 0 0 0 8.500 14.063l-6.135-1.582a.5.5 0 0 1 0-.962L8.500 9.936A2 2 0 0 0 9.937 8.500l1.582-6.135a.5.5 0 0 1 .963 0L14.063 8.500A2 2 0 0 0 15.500 9.937l6.135 1.581a.5.5 0 0 1 0 .964L15.500 14.063a2 2 0 0 0-1.437 1.437l-1.582 6.135a.5.5 0 0 1-.963 0zM20 3v4M22 5h-4M4 17v2M5 18H3"/></svg>Start Studying</button>
              <button class="cta plain d-flex align-items-center"><svg width="20" height="20" viewBox="0 0 24 24" class="ln" stroke-width="2"><path d="M18 14l4 4-4 4M18 2l4 4-4 4M2 18h1.973a4 4 0 0 0 3.300-1.700l5.454-8.600a4 4 0 0 1 3.300-1.700H22M2 6h1.972a4 4 0 0 1 3.600 2.200M22 18h-6.041a4 4 0 0 1-3.300-1.800l-.359-.45"/></svg>Shuffle First</button>
            </div>
          </div>
        </article>
        <article class="panel">
          <div class="panel-head d-flex align-items-center">
            <span class="tile grad d-flex align-items-center justify-content-center"><svg width="24" height="24" class="ln" stroke-width="2"><path d="M12 5a3 3 0 1 0-5.997.125 4 4 0 0 0-2.526 5.770 4 4 0 0 0 .556 6.588A4 4 0 1 0 12 18ZM12 5a3 3 0 1 1 5.997.125 4 4 0 0 1 2.526 5.770 4 4 0 0 1-.556 6.588A4 4 0 1 1 12 18ZM15 13a4.500 4.500 0 0 1-3-4 4.500 4.500 0 0 1-3 4M17.599 6.500a3 3 0 0 0 .399-1.375M6.003 5.125A3 3 0 0 0 6.401 6.500M3.477 10.896a4 4 0 0 1 .585-.396M19.938 10.500a4 4 0 0 1 .585.396M6 18a4 4 0 0 1-1.967-.516M19.967 17.484A4 4 0 0 1 18 18"/></svg></span>
            <h2>Quiz Mode</h2>
            <span class="pillb score d-flex align-items-center ms-auto"><svg width="15" height="15" viewBox="0 0 24 24" class="ln" stroke-width="2"><circle cx="12" cy="12" r="10"/><circle cx="12" cy="12" r="6"/><circle cx="12" cy="12" r="2"/></svg>0/0</span>
            <span class="pillb step d-flex align-items-center">1 / 8</span>
          </div>
          <div class="prog d-flex justify-content-between"><span>Progress</span><span>13%</span></div>
        </article>
      </div>
      <div class="vscroll d-flex flex-column align-items-center">
        <svg width="12" height="10" fill="currentColor"><path d="M6 0l6 10H0z"/></svg>
        <div class="above"></div><div class="knob"></div><div class="below"></div>
        <svg width="12" height="10" fill="currentColor"><path d="M6 10l6-10H0z"/></svg>
      </div>
    </div>
  </section>
</main>
<script src="https://cdn.jsdelivr.net/npm/bootstrap@5.3.0/dist/js/bootstrap.bundle.min.js"></script>
</body>
</html>
